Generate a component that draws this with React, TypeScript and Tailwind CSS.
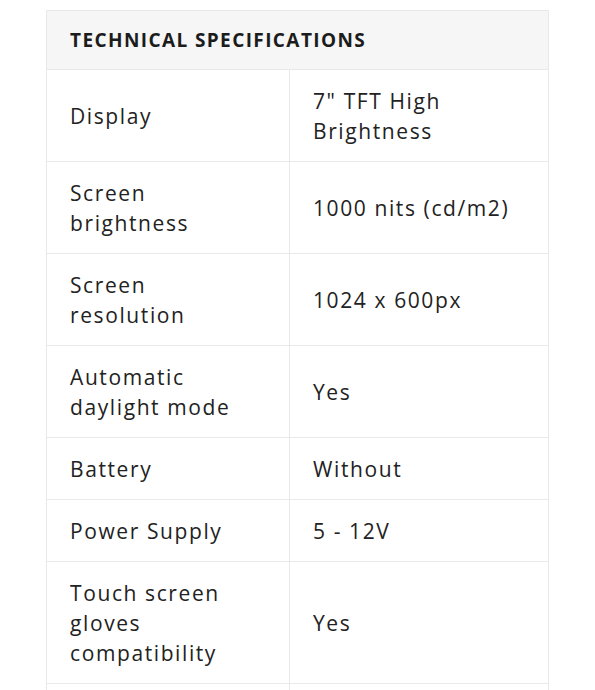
import React from "react";

const rows: [string, string][] = [
  ["Display", "7\" TFT High Brightness"],
  ["Screen brightness", "1000 nits (cd/m2)"],
  ["Screen resolution", "1024 x 600px"],
  ["Automatic daylight mode", "Yes"],
  ["Battery", "Without"],
  ["Power Supply", "5 - 12V"],
  ["Touch screen gloves compatibility", "Yes"],
];

export default function App() {
  return (
    <div
      className="min-h-[690px] bg-white pt-[10px] pl-[46px] pr-[46px]"
      style={{ fontFamily: '"Open Sans", "Noto Sans", sans-serif' }}
    >
      <div className="w-[503px] border border-[#e9e9e9] border-b-0">
        <div className="flex h-[59px] items-center border-b border-[#e9e9e9] bg-[#f6f6f6] pl-[23px]">
          <span className="text-[19px] font-bold tracking-[1.4px] text-[#1c1c1c]">
            TECHNICAL SPECIFICATIONS
          </span>
        </div>
        {rows.map(([k, v]) => (
          <div key={k} className="grid grid-cols-[242px_1fr] border-b border-[#e9e9e9]">
            <div className="flex items-center pl-[23px] pr-[30px] pt-[16px] pb-[15px] text-[21px] leading-[30px] tracking-[1.6px] text-[#222]">
              {k}
            </div>
            <div className="flex items-center border-l border-[#e9e9e9] pl-[23px] pr-[20px] pt-[16px] pb-[15px] text-[21px] leading-[30px] tracking-[1.6px] text-[#222]">
              {v}
            </div>
          </div>
        ))}
        <div className="grid h-[40px] grid-cols-[242px_1fr]">
          <div />
          <div className="border-l border-[#e9e9e9]" />
        </div>
      </div>
    </div>
  );
}
